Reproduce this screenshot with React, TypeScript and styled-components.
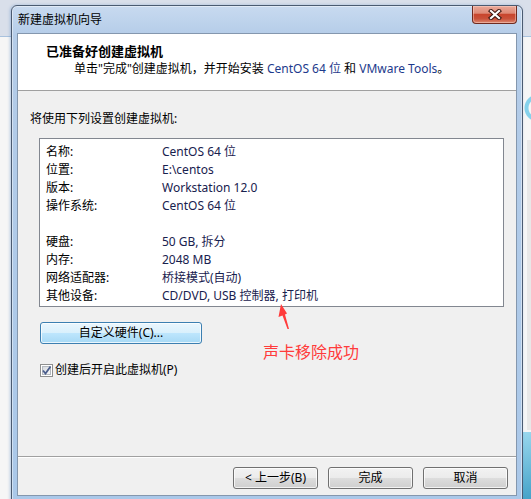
import React from "react";
import styled, { createGlobalStyle } from "styled-components";

const GlobalStyle = createGlobalStyle`
  html, body {
    margin: 0;
    padding: 0;
  }
  body {
    width: 531px;
    height: 499px;
    overflow: hidden;
    font-family: "Noto Sans", "Noto Sans CJK SC", sans-serif;
    font-size: 12px;
    color: #000;
  }
`;

const Desktop = styled.div`
  width: 531px;
  height: 499px;
  overflow: hidden;
  box-sizing: border-box;
  padding: 5px 0 0 11px;
  background:
    radial-gradient(circle at 538px 108px, transparent 9px, #86d2ec 10px, #86d2ec 13px, transparent 14px),
    linear-gradient(#e8e8e8, #e8e8e8) 527px 140px / 10px 290px no-repeat,
    linear-gradient(160deg, #9ad8ee, #3f9fc6) 523px 432px / 10px 70px no-repeat,
    linear-gradient(#d9dfea 0, #d9dfea 36px, #a9c2de 36px, #a9c2de 37px, #f6f6f6 37px);
`;

const Window = styled.div`
  width: 512px;
  box-sizing: border-box;
  border: 1px solid #4b5b71;
  border-radius: 6px 6px 0 0;
  padding: 0 5px 5px;
  background: linear-gradient(#c8daf0, #b4cce8 30px, #aac8e9);
  box-shadow: inset 0 0 0 1px rgba(255, 255, 255, 0.45), -1px 0 3px rgba(90, 140, 200, 0.45);
`;

const TitleBar = styled.div`
  height: 27px;
  display: flex;
  align-items: center;
  justify-content: space-between;
`;

const TitleText = styled.span`
  padding-left: 1px;
  padding-top: 1px;
  line-height: 16px;
`;

const CloseButton = styled.div`
  align-self: flex-start;
  width: 45px;
  height: 18px;
  box-sizing: border-box;
  border: 1px solid #6f2a1f;
  border-top: none;
  border-radius: 0 0 4px 4px;
  background: linear-gradient(#eaa898 0%, #de8a77 42%, #c8452d 50%, #c9513a 75%, #dc8870 100%);
  box-shadow: inset 0 0 0 1px rgba(255, 220, 210, 0.45);
  display: flex;
  align-items: center;
  justify-content: center;
`;

const Client = styled.div`
  border: 1px solid #8497ae;
  background: #f0f0f0;
`;

const Header = styled.div`
  height: 57px;
  background: #fff;
  border-bottom: 1px solid #a0a0a0;
  padding: 8px 0 0 28px;
  box-sizing: border-box;
`;

const HeaderTitle = styled.div`
  font-family: "Noto Sans CJK SC", sans-serif;
  font-weight: 700;
  font-size: 13px;
  line-height: 18px;
`;

const HeaderSub = styled.div`
  padding-left: 28px;
  line-height: 18px;
`;

const Product = styled.span`
  color: #1d3a8c;
`;

const Body = styled.div`
  position: relative;
  height: 365px;
  box-sizing: border-box;
  padding: 19px 12px 0 21px;
`;

const Intro = styled.div`
  margin-left: -9px;
  line-height: 18px;
`;

const ListBox = styled.div`
  margin-top: 10px;
  height: 169px;
  box-sizing: border-box;
  background: #fff;
  border: 1px solid #828790;
  padding: 4px 0 0 6px;
  display: grid;
  grid-template-columns: 116px 1fr;
  grid-auto-rows: 18px;
  align-content: start;
  line-height: 18px;
`;

const Label = styled.span`
  color: #000;
`;

const Value = styled.span`
  color: #18214e;
`;

const Spacer = styled.div`
  grid-column: 1 / span 2;
`;

const Button = styled.button<{ $hot?: boolean; $width: number }>`
  width: ${(p) => p.$width}px;
  height: 22px;
  box-sizing: border-box;
  padding: 0;
  font-family: "Noto Sans", "Noto Sans CJK SC", sans-serif;
  font-size: 12px;
  line-height: 18px;
  color: #000;
  border: 1px solid ${(p) => (p.$hot ? "#3c7fb1" : "#707070")};
  border-radius: 3px;
  background: ${(p) =>
    p.$hot
      ? "linear-gradient(#eaf6fd 0%, #d9f0fc 50%, #bee6fd 50%, #a7d9f5 100%)"
      : "linear-gradient(#f2f2f2 0%, #ebebeb 50%, #dddddd 50%, #cfcfcf 100%)"};
  box-shadow: inset 0 0 0 1px rgba(255, 255, 255, 0.75);
`;

const HardwareButton = styled(Button)`
  display: block;
  margin: 15px 0 0 1px;
`;

const CheckRow = styled.label`
  margin: 17px 0 0 1px;
  display: flex;
  align-items: center;
  gap: 2px;
  height: 18px;
  line-height: 18px;
`;

const CheckBox = styled.span`
  width: 13px;
  height: 13px;
  box-sizing: border-box;
  border: 1px solid #8e8f8f;
  background: #fff;
  padding: 1px;
  display: flex;
`;

const CheckInner = styled.span`
  flex: 1;
  border: 1px solid #b4b9bf;
  background: linear-gradient(135deg, #d7dbe0, #f7f7f7);
  position: relative;
`;

const CheckMark = styled.svg`
  position: absolute;
  left: -2px;
  top: -2px;
`;

const Arrow = styled.svg`
  position: absolute;
  left: 258px;
  top: 212px;
`;

const Note = styled.div`
  position: absolute;
  left: 245px;
  top: 251px;
  font-family: "Noto Sans CJK SC", sans-serif;
  font-size: 16px;
  line-height: 18px;
  color: #ff3b3b;
`;

const Footer = styled.div`
  height: 39px;
  box-sizing: border-box;
  border-top: 1px solid #a0a0a0;
  box-shadow: inset 0 1px #fff;
  padding: 10px 8px 0 0;
  display: flex;
  justify-content: flex-end;
  gap: 10px;
`;

const rows: Array<[string, string] | null> = [
  ["名称:", "CentOS 64 位"],
  ["位置:", "E:\\centos"],
  ["版本:", "Workstation 12.0"],
  ["操作系统:", "CentOS 64 位"],
  null,
  ["硬盘:", "50 GB, 拆分"],
  ["内存:", "2048 MB"],
  ["网络适配器:", "桥接模式(自动)"],
  ["其他设备:", "CD/DVD, USB 控制器, 打印机"],
];

export default function App() {
  return (
    <>
      <GlobalStyle />
      <Desktop>
        <Window>
          <TitleBar>
            <TitleText>新建虚拟机向导</TitleText>
            <CloseButton>
              <svg width="14" height="11" viewBox="0 0 14 11">
                <path d="M3 2 L11 9 M11 2 L3 9" stroke="#3b1610" strokeWidth="4.2" strokeLinecap="square" />
                <path d="M3 2 L11 9 M11 2 L3 9" stroke="#ffffff" strokeWidth="2.2" strokeLinecap="square" />
              </svg>
            </CloseButton>
          </TitleBar>
          <Client>
            <Header>
              <HeaderTitle>已准备好创建虚拟机</HeaderTitle>
              <HeaderSub>
                单击"完成"创建虚拟机，并开始安装 <Product>CentOS 64 位</Product> 和{" "}
                <Product>VMware Tools</Product>。
              </HeaderSub>
            </Header>
            <Body>
              <Intro>将使用下列设置创建虚拟机:</Intro>
              <ListBox>
                {rows.map((r, i) =>
                  r ? (
                    <React.Fragment key={i}>
                      <Label>{r[0]}</Label>
                      <Value>{r[1]}</Value>
                    </React.Fragment>
                  ) : (
                    <Spacer key={i} />
                  )
                )}
              </ListBox>
              <HardwareButton $hot $width={162}>
                自定义硬件(C)...
              </HardwareButton>
              <CheckRow>
                <CheckBox>
                  <CheckInner>
                    <CheckMark width="11" height="11" viewBox="0 0 11 11">
                      <path d="M2 5.5 L4.5 8.5 L9.5 1.5" fill="none" stroke="#4a5d8c" strokeWidth="1.8" />
                    </CheckMark>
                  </CheckInner>
                </CheckBox>
                创建后开启此虚拟机(P)
              </CheckRow>
              <Arrow width="16" height="28" viewBox="0 0 16 28">
                <polygon points="5,1 11,10.5 9,11.5 13,26 11.5,26 6.5,12.5 2.5,14" fill="#ff3b3b" />
              </Arrow>
              <Note>声卡移除成功</Note>
            </Body>
            <Footer>
              <Button $width={85}>&lt; 上一步(B)</Button>
              <Button $width={85}>完成</Button>
              <Button $width={85}>取消</Button>
            </Footer>
          </Client>
        </Window>
      </Desktop>
    </>
  );
}
